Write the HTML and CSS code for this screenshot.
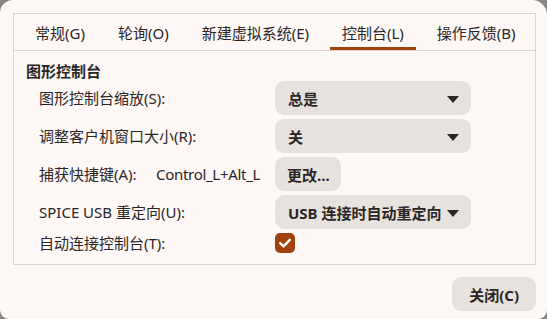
FILE: index.html
```html
<!DOCTYPE html>
<html lang="zh-CN">
<head>
<meta charset="utf-8">
<link rel="stylesheet" href="styles.css">
</head>
<body>
<div class="window">
  <div class="notebook">
    <div class="tabs">
      <div class="tab">常规(G)</div>
      <div class="tab">轮询(O)</div>
      <div class="tab">新建虚拟系统(E)</div>
      <div class="tab active">控制台(L)</div>
      <div class="tab">操作反馈(B)</div>
    </div>
    <div class="page">
      <div class="heading">图形控制台</div>
      <div class="grid">
        <div class="label wide">图形控制台缩放(S):</div>
        <div class="combo"><span>总是</span><span class="arrow"></span></div>

        <div class="label wide">调整客户机窗口大小(R):</div>
        <div class="combo"><span>关</span><span class="arrow"></span></div>

        <div class="label">捕获快捷键(A):</div>
        <div class="label keys">Control_L+Alt_L</div>
        <div class="cell"><div class="button">更改...</div></div>

        <div class="label wide">SPICE USB 重定向(U):</div>
        <div class="combo"><span>USB 连接时自动重定向</span><span class="arrow"></span></div>

        <div class="label wide">自动连接控制台(T):</div>
        <div class="cell">
          <div class="check">
            <svg width="20" height="20" viewBox="0 0 20 20"><path d="M5.2 10.2 L8.5 13.4 L14.8 6.8" fill="none" stroke="#fff" stroke-width="2.4" stroke-linecap="round" stroke-linejoin="round"/></svg>
          </div>
        </div>
      </div>
    </div>
  </div>
  <div class="footer">
    <div class="button close">关闭(C)</div>
  </div>
</div>
</body>
</html>
```
FILE: styles.css
```css
html, body {
  margin: 0;
  padding: 0;
  background: #868686;
}
body {
  width: 547px;
  height: 319px;
  overflow: hidden;
  font-family: "Noto Sans", "Noto Sans CJK SC", sans-serif;
  font-size: 15px;
  color: #2b2626;
}
.window {
  width: 547px;
  height: 319px;
  box-sizing: border-box;
  background: #fef8f6;
  border-radius: 13px 15px 9px 9px;
  padding: 13px 11px 11px 13px;
  display: flex;
  flex-direction: column;
}
.notebook {
  border: 1px solid #ddd4d1;
  display: flex;
  flex-direction: column;
}
.tabs {
  display: flex;
  gap: 9px;
  padding-left: 9px;
  border-bottom: 1px solid #ddd4d1;
  height: 36px;
}
.tab {
  padding: 0 12px;
  display: flex;
  align-items: center;
  line-height: 20px;
  padding-top: 1px;
  box-sizing: border-box;
}
.tab.active {
  box-shadow: inset 0 -3px 0 #a1420d;
}
.page {
  padding: 10px 12px 11px 12px;
}
.heading {
  font-weight: bold;
  line-height: 20px;
}
.grid {
  margin-left: 13px;
  display: grid;
  grid-template-columns: 117px 119px 196px;
  row-gap: 4px;
  align-items: center;
}
.label {
  line-height: 20px;
  white-space: nowrap;
}
.label.wide {
  grid-column: 1 / 3;
}
.keys {
  letter-spacing: -0.3px;
}
.combo {
  height: 34px;
  box-sizing: border-box;
  border-radius: 9px;
  background: #e8e2df;
  font-weight: bold;
  display: flex;
  align-items: center;
  justify-content: space-between;
  padding: 0 12px 0 13px;
}
.arrow {
  width: 0;
  height: 0;
  border-left: 6px solid transparent;
  border-right: 6px solid transparent;
  border-top: 7px solid #2b2626;
  margin-top: 2px;
}
.cell {
  display: flex;
}
.button {
  height: 34px;
  box-sizing: border-box;
  border-radius: 9px;
  background: #e8e2df;
  font-weight: bold;
  display: flex;
  align-items: center;
  padding: 0 11px 0 12px;
}
.check {
  width: 20px;
  height: 20px;
  border-radius: 5px;
  background: #a1420d;
}
.check svg {
  display: block;
}
.footer {
  margin-top: 12px;
  display: flex;
  justify-content: flex-end;
}
.close {
  padding: 0 17px;
}
```
